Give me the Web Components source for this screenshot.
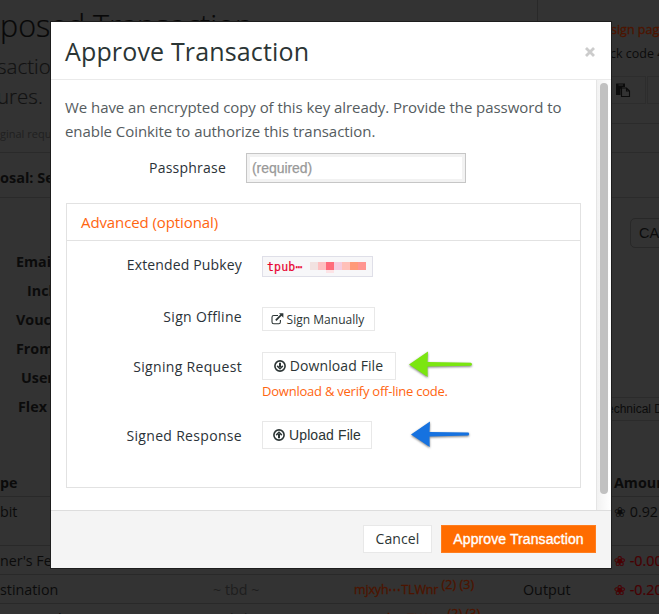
<!DOCTYPE html>
<html lang="en">
<head>
<meta charset="utf-8">
<title>Approve Transaction</title>
<style>
html,body{margin:0;height:614px;overflow:hidden;background:#333}
body{font-family:"Open Sans","Noto Sans",sans-serif;font-size:14px}
</style>
</head>
<body>
<ck-app></ck-app>
<script>
const define=(name,html)=>customElements.define(name,class extends HTMLElement{
  constructor(){super();this.attachShadow({mode:'open'}).innerHTML=html;}
});

define('ck-button',`<style>
:host{display:inline-flex;align-items:center;justify-content:center;box-sizing:border-box;height:28px;border:1px solid #e8e8e8;background:#fff;color:#2c3535;white-space:nowrap;font-size:14px;letter-spacing:.1px;padding-bottom:1px}
:host([kind=primary]){background:#ff6c00;border-color:#ff7d1e;color:#fff;-webkit-text-stroke:.35px #fff}
:host([kind=small]){height:24px;font-size:12px;letter-spacing:.02px;padding-bottom:0;padding-right:2px}
</style><slot></slot>`);

define('ck-field',`<style>
:host{display:grid;grid-template-columns:175px 1fr;column-gap:20px;box-sizing:border-box;align-items:start}
.label{text-align:right;line-height:20px;color:#2b3238;letter-spacing:var(--ls,.32px);white-space:nowrap}
.control{display:flex;align-items:center;flex-wrap:wrap}
</style><div class="label"><slot name="label"></slot></div><div class="control"><slot></slot></div>`);

define('ck-icon-circle',`<style>:host{display:block;width:12px;height:12px;margin-right:4px;flex:none}:host([up]) svg{transform:scaleY(-1)}svg{display:block}</style>
<svg width="12" height="12" viewBox="0 0 12 12" fill="none" stroke="#2c3535"><circle cx="6" cy="6" r="5.1" stroke-width="1.6"/><path d="M6 2.8V7" stroke-width="2"/><path d="M3.2 5.9 6 8.7 8.8 5.9" stroke-width="1.5"/></svg>`);

define('ck-icon-external',`<style>:host{display:block;width:13px;height:12px;margin-right:3px;flex:none}svg{display:block}</style>
<svg width="13" height="12" viewBox="0 0 13 12" fill="none" stroke="#2c3535"><path d="M7 2.5H2.8Q1 2.5 1 4.2V9Q1 10.8 2.8 10.8H7.7Q9.4 10.8 9.4 9V7" stroke-width="1.1"/><path d="M4.8 7.3 10.5 1.7" stroke-width="1.8"/><path d="M8 .3H12.4V4.7Z" fill="#2c3535" stroke="none"/></svg>`);

define('ck-arrow',`<style>:host{display:block;width:66px;height:28px;flex:none}svg{display:block;overflow:visible;filter:drop-shadow(0 1.5px 1px rgba(0,0,0,.5))}
.short{display:none}:host([short]) .short{display:inline}:host([short]) .long{display:none}</style>
<svg width="66" height="28" viewBox="0 0 66 28" fill="currentColor"><path class="long" d="M1 13.5 20 .5 19.5 11 63 11.8Q65 13.3 63 14.8L19.5 15.5 19.7 26Z"/><path class="short" d="M1 13.5 20 .5 19.5 11 58.5 11.5Q60 13 58.5 14.5L19.5 15.5 19.7 26Z"/></svg>`);

define('ck-code',`<style>
:host{display:flex;align-items:center;box-sizing:border-box;width:111px;height:21px;border:1px solid #dfdfe8;background:#f7f7f9;padding-left:4px;color:#e8002f;font:11.5px "DejaVu Sans Mono",monospace;letter-spacing:.2px;white-space:nowrap;-webkit-text-stroke:.2px #e8002f}
.mask{display:flex;height:8px;margin-left:7px;margin-top:-1px}
.mask i{width:8px;height:8px}
.mask i:nth-child(3){position:relative}
.mask i:nth-child(3)::after{content:"";position:absolute;left:0;top:8px;width:8px;height:3px;background:#fde3e6}
</style><slot></slot><span class="mask"><i style="background:#f2e2e1"></i><i style="background:#fec0c1"></i><i style="background:#ff6a7a"></i><i style="background:#f5cce0"></i><i style="background:#ffc0b9"></i><i style="background:#ff9a78"></i><i style="background:#ff9590"></i></span>`);

define('ck-modal',`<style>
:host{display:flex;flex-direction:column;box-sizing:border-box;width:560px;height:546px;background:#fff;box-shadow:0 0 0 1px #1d1d1d}
header{box-sizing:border-box;height:58px;border-bottom:1px solid #eaeaea;padding:0 16px 0 14px;display:flex;align-items:center;justify-content:space-between;color:#2b3535;font-size:25px;white-space:nowrap}
.title{line-height:34px;letter-spacing:.15px}
.close{width:10px;height:10px;padding-top:2px}
.close svg{display:block}
.body{display:grid;grid-template-columns:1fr 15px;height:430px}
.content{padding:15px 15px 0;box-sizing:border-box;min-width:0}
.bar{box-sizing:border-box;border-left:1px solid #e5e5e5;background:linear-gradient(90deg,#f2f2f2,#fff);padding:3px 0 0 3px}
.thumb{width:8px;height:411px;border-radius:4px;background:#c1c1c1}
footer{box-sizing:border-box;height:58px;border-top:1px solid #ddd;background:#f4f4f4;display:flex;justify-content:flex-end;padding:14px 15px 0;gap:9px}
</style><header><span class="title"><slot name="title"></slot></span><span class="close"><svg width="10" height="10" viewBox="0 0 10 10" stroke="#ccc" stroke-width="2.8"><path d="M1 1 9 9M9 1 1 9"/></svg></span></header>
<div class="body"><div class="content"><slot></slot></div><div class="bar"><div class="thumb"></div></div></div>
<footer><slot name="actions"></slot></footer>`);

define('ck-approve',`<style>
:host{display:block}
p{margin:0 0 0 -1px;line-height:24px;font-size:15px;color:#555c60;white-space:nowrap;letter-spacing:-.06px}
.pass{margin-top:10px;grid-template-columns:160px 220px;height:50px;--ls:.22px}
.pass [slot=label]{display:block;padding-top:5px}
.input{box-sizing:border-box;width:220px;height:30px;border:1px solid #c6c6c6;box-shadow:inset 0 0 0 3px #f2f2f2;padding:0 5px;font:14px/28px "Liberation Sans",Arial,sans-serif;color:#999;letter-spacing:-.05px;-webkit-text-stroke:.25px #999}
.panel{box-sizing:border-box;width:515px;height:285px;border:1px solid #e2e2e2}
.head{box-sizing:border-box;height:37px;border-bottom:1px solid #e2e2e2;padding-left:14px;line-height:37px;font-size:15px;color:#ff6510;letter-spacing:-.1px}
.ext{padding-top:14px;height:60px;--ls:.15px}.off{height:46px}.req{height:69px;margin-top:5px}
.low{display:block;padding-top:5px}
.code{margin-top:1px}
.manual{width:113px;margin-top:6px}
.dl{width:134px;padding-right:1px}.ul{width:110px;letter-spacing:.1px}
.hint{width:100%;font-size:13px;line-height:20px;color:#ff6510;white-space:nowrap;margin-top:1px;letter-spacing:-.23px}
.arrow{margin:-6px 0 0 12px;height:24px;color:#7be610}
.arrow.b{margin-left:38px;margin-top:-4px;color:#1672e0}
</style><ck-modal><span slot="title">Approve Transaction</span>
<p>We have an encrypted copy of this key already. Provide the password to<br>enable Coinkite to authorize this transaction.</p>
<ck-field class="pass"><span slot="label">Passphrase</span><div class="input">(required)</div></ck-field>
<div class="panel"><div class="head">Advanced (optional)</div>
<ck-field class="ext"><span slot="label">Extended Pubkey</span><ck-code class="code">tpub⋯</ck-code></ck-field>
<ck-field class="off"><span slot="label" style="display:block;padding-top:6px">Sign Offline</span><ck-button kind="small" class="manual"><ck-icon-external></ck-icon-external>Sign Manually</ck-button></ck-field>
<ck-field class="req"><span slot="label" class="low">Signing Request</span><ck-button class="dl"><ck-icon-circle></ck-icon-circle>Download File</ck-button><ck-arrow class="arrow"></ck-arrow><div class="hint">Download &amp; verify off-line code.</div></ck-field>
<ck-field><span slot="label" class="low">Signed Response</span><ck-button class="ul" style="font-family:'Liberation Sans',Arial,sans-serif"><ck-icon-circle up></ck-icon-circle>Upload File</ck-button><ck-arrow short class="arrow b"></ck-arrow></ck-field>
</div>
<ck-button slot="actions" style="width:69px">Cancel</ck-button><ck-button slot="actions" kind="primary" style="width:155px;font-family:'Liberation Sans',Arial,sans-serif">Approve Transaction</ck-button>
</ck-modal>`);

define('ck-backdrop',`<style>
:host{display:grid;grid-template-columns:537px 1fr;grid-template-rows:467px 147px;width:659px;height:614px;overflow:hidden;color:#0b0b0b;white-space:nowrap}
section{overflow:hidden;box-sizing:border-box}
h1{margin:0;font-weight:300;font-size:30.5px;line-height:40px;padding-top:5px;height:45px;color:#080808;-webkit-text-stroke:.2px #080808}
.sub{box-sizing:border-box;height:62px;font-size:20.5px;line-height:30px;margin-left:-3px;padding-top:1px;color:#111;font-weight:300;-webkit-text-stroke:.15px #111}
.note{box-sizing:border-box;height:28px;margin-top:13px;padding-top:1px;font-size:11px;line-height:16px;color:#202020;border-bottom:1px solid #2a2a2a}
.prop{height:45px;box-sizing:border-box;line-height:49px;font-weight:700;font-size:14.5px;border-bottom:1px solid #2a2a2a}
.keys{padding:49px 0 0 1px;font-weight:700;font-size:14.3px;line-height:29px}
.side{border-left:1px solid #292929}
.a{padding:18px 0 0 72px;font-size:12.5px;line-height:24px}
.a .o{padding-left:1px}
.o{color:#4d1400;-webkit-text-stroke:.3px #4d1400}
.tabs{display:flex;gap:1px;margin-top:10px;margin-left:40px;height:28px}
.tabs b{box-sizing:border-box;flex:none;border:1px solid #2d2d2d;height:28px;width:68px;padding:6px 0 0 37px}
.tabs svg{display:block}
.line{border-top:1px solid #2b2b2b}
.ca{box-sizing:border-box;margin:20px 0 0 92px;width:80px;height:30px;border:1px solid #282828;border-radius:5px;font:14.5px/28px "Liberation Sans",Arial,sans-serif;padding-left:8px}
.tech{margin-top:149px;height:24px;box-sizing:border-box;border:solid #2b2b2b;border-width:1px 0;padding-left:69px;font:12px/22px "Liberation Sans",Arial,sans-serif}
.table{grid-column:1/3}
.r{display:grid;grid-template-columns:213px 141px 169px 91px 1fr;box-sizing:border-box;border-bottom:1px solid #292929;height:29px;line-height:30px;font-size:14.3px}
.r.h{font-weight:700;height:30px;line-height:31px}
.r.t{height:49px}.dim{color:#1e1e1e}.red{color:#480002;-webkit-text-stroke:.2px #480002}
.addr{font-size:12.5px;letter-spacing:-.15px}.addr sup{font-size:12.5px;line-height:0;vertical-align:5px;letter-spacing:.1px}
</style>
<section><h1>posed Transaction</h1><div class="sub">saction<br>ures.</div><div class="note">ginal request</div><div class="prop">osal: Se</div>
<div class="keys"><div style="padding-left:15px">Email</div><div style="padding-left:26px">Incl</div><div style="padding-left:15px">Vouch</div><div style="padding-left:15px">From</div><div style="padding-left:20px">User</div><div style="padding-left:17px">Flex</div></div></section>
<section class="side"><div class="a"><div class="o">sign page</div><div>ck code 4</div></div>
<div class="tabs"><b><svg width="15" height="15" viewBox="0 0 15 15"><path d="M0 1Q0 .5 .5 .5H9V4H6.5L4.5 6V12H0Z" fill="#0b0b0b"/><path d="M2.5 2H7" stroke="#333"/><path d="M5.5 5H10.5L13.5 8V13.5H5.5Z M10.5 5V8H13.5" fill="#333" stroke="#0b0b0b" stroke-width="1.1"/></svg></b><b></b></div>
<div class="line" style="margin-top:19px"></div><div class="line" style="margin-top:28px"></div><div class="line" style="margin-top:44px"></div>
<div class="ca">CARD</div><div class="tech">echnical Details</div></section>
<section class="table">
<div class="r h"><span>pe</span><span></span><span></span><span></span><span>Amount</span></div>
<div class="r t"><span>bit</span><span></span><span></span><span></span><span>❀ 0.92</span></div>
<div class="r"><span>ner's Fee</span><span></span><span></span><span></span><span class="red">❀ -0.00</span></div>
<div class="r"><span>stination</span><span class="dim">~ tbd ~</span><span class="addr o">mjxyh⋯TLWnr <sup>(2) (3)</sup></span><span>Output</span><span class="red">❀ -0.20</span></div>
<div class="r"><span style="padding-left:34px">Back</span><span class="dim">~ tbd ~</span><span class="addr o" style="padding-left:6px">mjxyh⋯TLWnr <sup>(2) (3)</sup></span><span>Output</span><span>❀ 0.24</span></div>
</section>`);

define('ck-app',`<style>
:host{display:block;position:relative;width:659px;height:614px;overflow:hidden}
.over{position:absolute;left:51px;top:22px}
</style><ck-backdrop></ck-backdrop><ck-approve class="over"></ck-approve>`);
</script>
</body>
</html>
